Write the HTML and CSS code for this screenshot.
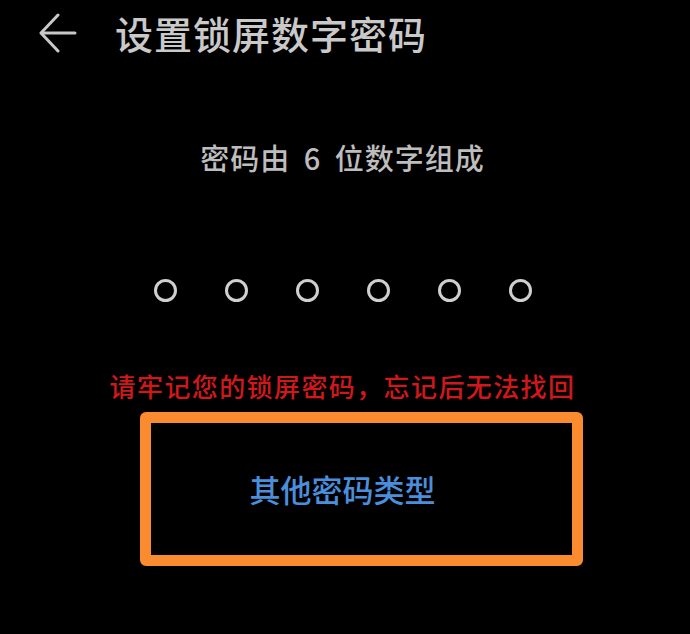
FILE: index.html
```html
<!DOCTYPE html>
<html lang="zh-CN">
<head>
<meta charset="utf-8">
<title>设置锁屏数字密码</title>
<link rel="stylesheet" href="styles.css">
</head>
<body>
<div class="screen">
  <header class="topbar">
    <svg class="back" width="38" height="40" viewBox="0 0 38 40" fill="none" stroke="#c8c8c8" stroke-width="3" stroke-linecap="round" stroke-linejoin="round">
      <path d="M36 20 H3"/>
      <path d="M19 2 L2 20 L19 38"/>
    </svg>
    <h1 class="title">设置锁屏数字密码</h1>
  </header>
  <main class="content">
    <p class="hint">密码由 6 位数字组成</p>
    <div class="dots">
      <span class="dot"></span><span class="dot"></span><span class="dot"></span>
      <span class="dot"></span><span class="dot"></span><span class="dot"></span>
    </div>
    <p class="warn">请牢记您的锁屏密码，忘记后无法找回</p>
    <div class="other">其他密码类型</div>
  </main>
  <div class="highlight"></div>
</div>
</body>
</html>
```
FILE: styles.css
```css
html, body {
  margin: 0;
  padding: 0;
  background: #000;
}
.screen {
  position: relative;
  width: 690px;
  height: 634px;
  background: #000;
  font-family: "Noto Sans CJK SC", "Noto Sans", sans-serif;
  overflow: hidden;
}
.topbar {
  display: flex;
  align-items: center;
  height: 68px;
  padding-left: 39px;
}
.back {
  flex: none;
  margin-top: -2px;
}
.title {
  margin: -3px 0 0 38px;
  font-size: 38px;
  font-weight: 500;
  letter-spacing: 1px;
  color: #c9c9c9;
  line-height: 1;
}
.content {
  display: block;
  padding-right: 5px;
}
.hint {
  margin: 69px 0 0;
  text-align: center;
  font-size: 29px;
  font-weight: 500;
  letter-spacing: 1px;
  word-spacing: 6px;
  color: #bdbdbd;
  line-height: 40px;
}
.dots {
  display: flex;
  justify-content: center;
  gap: 48px;
  margin-top: 102px;
}
.dot {
  width: 17px;
  height: 17px;
  border: 3px solid #cfcfcf;
  border-radius: 50%;
}
.warn {
  margin: 69px 0 0;
  text-align: center;
  font-size: 26px;
  font-weight: 500;
  letter-spacing: 1.4px;
  color: #d0181c;
  line-height: 30px;
}
.other {
  margin-top: 68px;
  text-align: center;
  font-size: 31px;
  font-weight: 500;
  color: #4b8fdc;
  line-height: 40px;
}
.highlight {
  position: absolute;
  left: 140px;
  top: 412px;
  width: 443px;
  height: 154px;
  box-sizing: border-box;
  border: 11px solid #fb8b2f;
  border-radius: 6px;
}
```
